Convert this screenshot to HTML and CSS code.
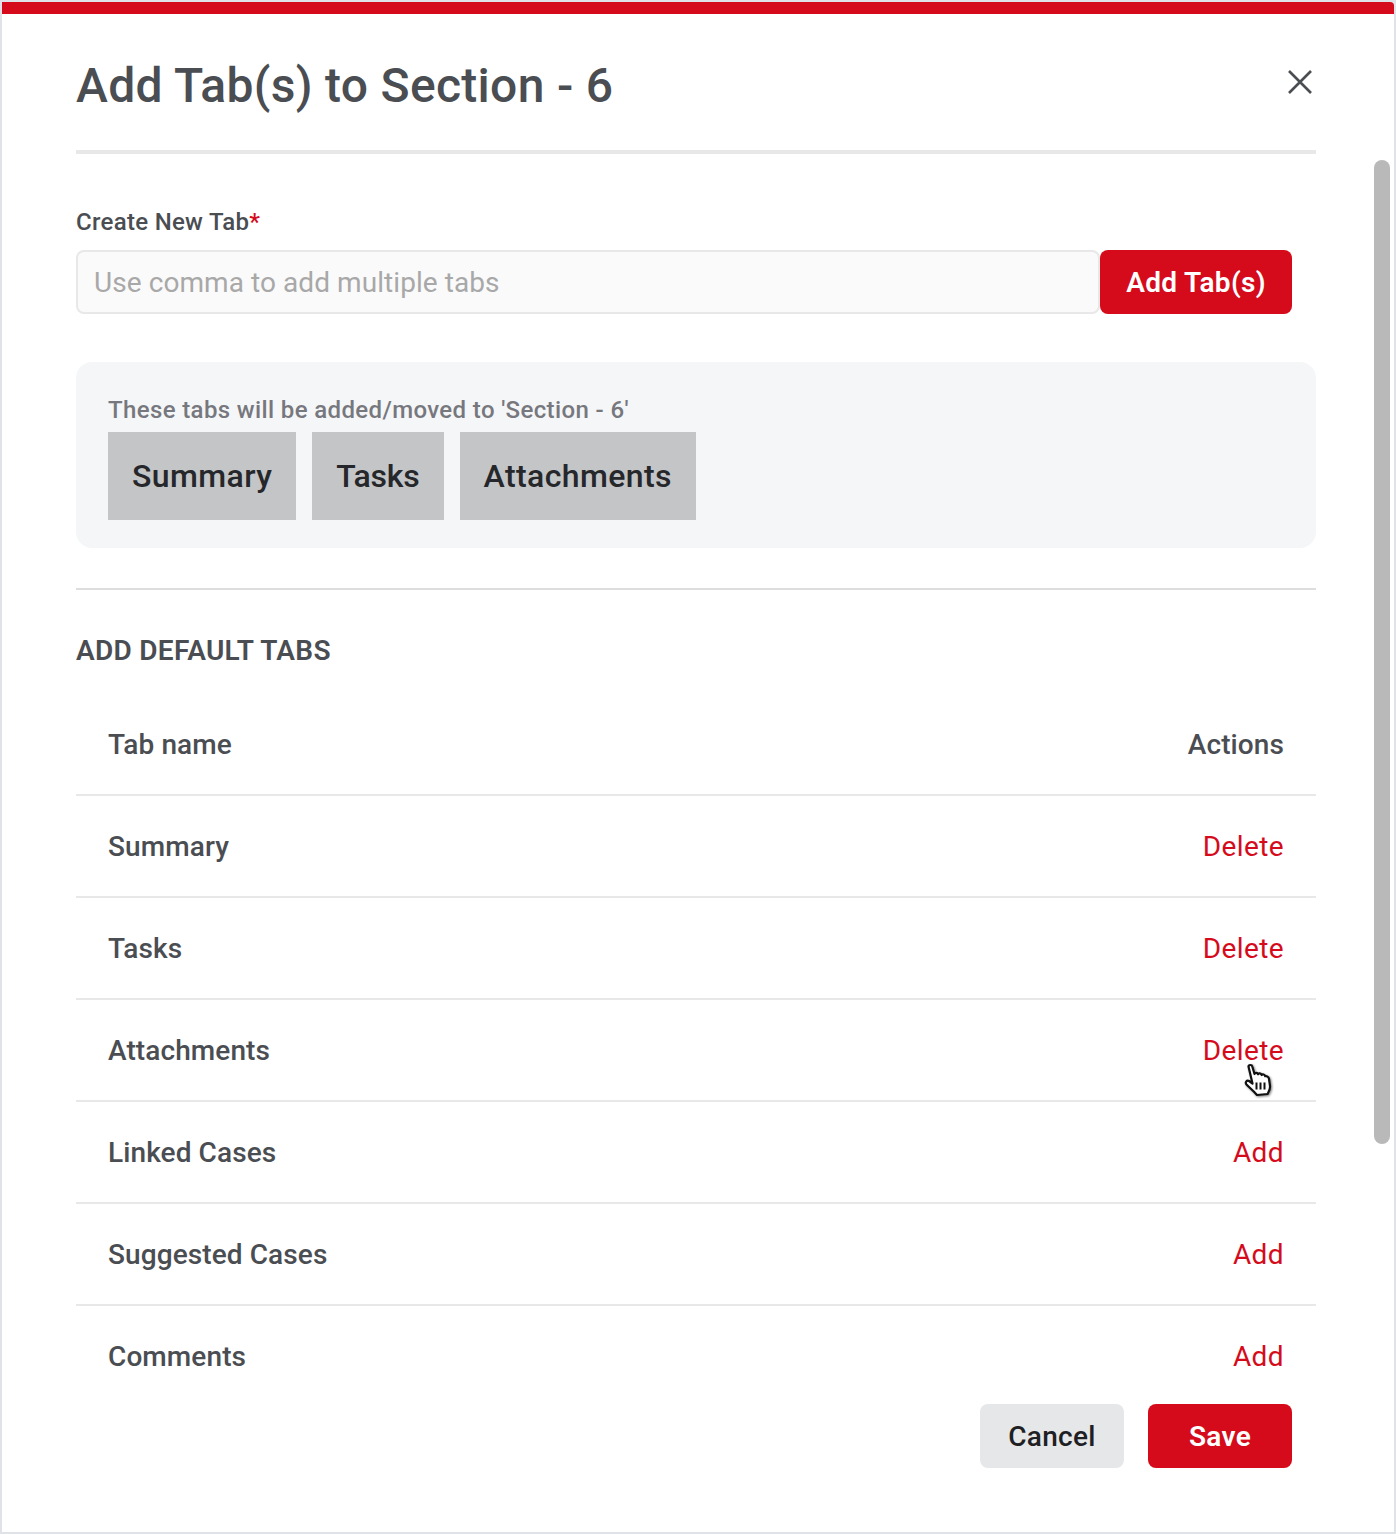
FILE: index.html
```html
<!DOCTYPE html>
<html lang="en">
<head>
    <meta charset="UTF-8">
    <title>Add Tab(s) to Section - 6</title>
    <link rel="stylesheet" href="styles.css">
</head>
<body>
    <div class="modal">
        <div class="modal-header">
            <h1 class="modal-title">Add Tab(s) to Section - 6</h1>
            <svg class="close-icon" viewBox="0 0 24 24" width="24" height="24">
                <path d="M1 1 L23 23 M23 1 L1 23" fill="none" stroke="#4a4d52" stroke-width="2.6"/>
            </svg>
        </div>

        <div class="modal-body">
            <label class="field-label">Create New Tab<span class="required">*</span></label>
            <div class="input-row">
                <input class="tab-input" type="text" placeholder="Use comma to add multiple tabs">
                <button class="btn btn-primary btn-add">Add Tab(s)</button>
            </div>

            <div class="preview-panel">
                <div class="preview-label">These tabs will be added/moved to 'Section - 6'</div>
                <div class="chips">
                    <span class="chip">Summary</span>
                    <span class="chip chip-tight">Tasks</span>
                    <span class="chip">Attachments</span>
                </div>
            </div>

            <h2 class="section-title">ADD DEFAULT TABS</h2>

            <div class="tab-row tab-row-head">
                <span>Tab name</span>
                <span>Actions</span>
            </div>
            <div class="tab-row"><span>Summary</span><a class="row-action">Delete</a></div>
            <div class="tab-row"><span>Tasks</span><a class="row-action">Delete</a></div>
            <div class="tab-row"><span>Attachments</span><a class="row-action">Delete</a></div>
            <div class="tab-row"><span>Linked Cases</span><a class="row-action">Add</a></div>
            <div class="tab-row"><span>Suggested Cases</span><a class="row-action">Add</a></div>
            <div class="tab-row"><span>Comments</span><a class="row-action">Add</a></div>
        </div>

        <div class="modal-footer">
            <button class="btn btn-cancel">Cancel</button>
            <button class="btn btn-primary">Save</button>
        </div>

        <div class="scroll-thumb"></div>
    </div>

    <svg class="hand-cursor" viewBox="0 0 30 36" width="30" height="36">
        <path d="M5.5 4.5 C5.5 2.5 9 2.5 9.3 4.5 L11.5 12 C12 10.5 14.5 10.5 15 12.3 C15.6 11 18 11 18.6 13 C19.4 12 21.8 12.4 22.2 14.2 C23.5 13.8 25.8 14.8 26 17 L27 24 C27.3 28 25.5 30 24.5 32 L14 33 C11 29.5 7 26 3.5 22.5 C1.8 20.5 3.6 18 6 19 L9.5 21.5 Z" fill="#fff" stroke="#111" stroke-width="2.2" stroke-linejoin="round"/>
        <path d="M13.5 20.5 V27.5 M17.5 20.5 V27.5 M21.5 20.5 V27.5" fill="none" stroke="#111" stroke-width="2"/>
    </svg>
</body>
</html>
```

FILE: styles.css
```css
html, body {
    margin: 0;
    height: 1534px;
    overflow: hidden;
}
body {
    background: #dfe2e6;
    font-family: Roboto, "Noto Sans", sans-serif;
    color: #4a4d52;
}
.modal {
    position: relative;
    display: flex;
    flex-direction: column;
    height: 1530px;
    margin: 2px;
    box-sizing: border-box;
    background: #fff;
    border-top: 12px solid #d50b1c;
    border-top-right-radius: 4px;
}
.modal-header {
    display: flex;
    justify-content: space-between;
    align-items: flex-start;
    margin: 0 78px 0 74px;
    padding: 41px 0 33px;
    border-bottom: 4px solid #e8e8e8;
}
.modal-title {
    margin: 0;
    font-size: 48px;
    line-height: 62px;
    font-weight: 500;
    letter-spacing: 0.3px;
}
.close-icon {
    margin: 15px 4px 0 0;
}
.modal-body {
    height: 1236px;
    overflow: hidden;
    margin: 0 78px 0 74px;
}
.field-label {
    display: block;
    margin: 52px 0 12px;
    font-size: 24px;
    line-height: 32px;
    font-weight: 500;
    letter-spacing: 0.3px;
}
.required {
    color: #d50b1c;
}
.input-row {
    display: flex;
}
.tab-input {
    width: 1024px;
    height: 64px;
    box-sizing: border-box;
    padding: 0 16px;
    border: 2px solid #e8e8e8;
    border-radius: 8px;
    background: #fafafa;
    font-family: inherit;
    font-size: 28px;
    letter-spacing: 0.07px;
}
.tab-input::placeholder {
    color: #a8a8a8;
    opacity: 1;
}
.btn {
    width: 144px;
    height: 64px;
    border: none;
    border-radius: 8px;
    font-family: inherit;
    font-size: 28px;
    font-weight: 600;
    letter-spacing: 0.3px;
}
.btn-primary {
    background: #d50b1c;
    color: #fff;
}
.btn-add {
    width: 192px;
}
.btn-cancel {
    background: #e6e7e9;
    color: #1f2023;
    font-weight: 500;
}
.preview-panel {
    margin-top: 48px;
    padding: 32px 32px 28px;
    background: #f5f6f8;
    border-radius: 16px;
}
.preview-label {
    margin-bottom: 6px;
    font-size: 24px;
    line-height: 32px;
    font-weight: 500;
    letter-spacing: 0.37px;
    color: #77787e;
}
.chips {
    display: flex;
    gap: 16px;
}
.chip {
    padding: 1px 24px 0;
    background: #c4c5c7;
    color: #26272b;
    font-size: 32px;
    line-height: 87px;
    font-weight: 500;
    letter-spacing: 0.4px;
}
.chip-tight {
    letter-spacing: -0.2px;
}
.section-title {
    margin: 40px 0 0;
    padding-top: 43px;
    border-top: 2px solid #dddddd;
    font-size: 28px;
    line-height: 36px;
    font-weight: 600;
    letter-spacing: 0.3px;
}
.tab-row {
    display: flex;
    justify-content: space-between;
    align-items: center;
    height: 102px;
    box-sizing: border-box;
    padding: 0 32px;
    border-bottom: 2px solid #e8e8e8;
    font-size: 28px;
    font-weight: 500;
    letter-spacing: 0.1px;
}
.tab-row-head {
    margin-top: 25px;
}
.tab-row:last-child {
    height: 100px;
    border-bottom: none;
}
.row-action {
    color: #d50b1c;
    font-weight: 400;
    letter-spacing: 0.4px;
}
.modal-footer {
    display: flex;
    justify-content: flex-end;
    gap: 24px;
    padding: 14px 102px 0 0;
}
.scroll-thumb {
    position: absolute;
    top: 146px;
    right: 4px;
    width: 16px;
    height: 984px;
    background: #b8b9b8;
    border-radius: 8px;
}
.hand-cursor {
    position: absolute;
    left: 1243px;
    top: 1062px;
    filter: drop-shadow(1px 1px 1px rgba(0, 0, 0, 0.5));
}
```
